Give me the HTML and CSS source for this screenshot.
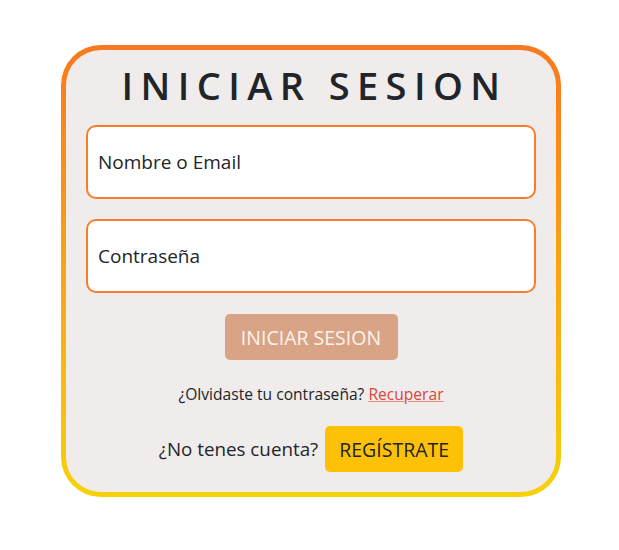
FILE: index.html
```html
<!DOCTYPE html>
<html lang="es">
<head>
<meta charset="utf-8">
<title>Iniciar sesión</title>
<link rel="stylesheet" href="styles.css">
</head>
<body>
<div class="page">
  <form class="card">
    <h1 class="title">INICIAR SESION</h1>
    <div class="field"><span class="placeholder">Nombre o Email</span></div>
    <div class="field"><span class="placeholder">Contraseña</span></div>
    <div class="actions"><button type="button" class="btn-login">INICIAR SESION</button></div>
    <p class="recover">¿Olvidaste tu contraseña? <a href="#" class="link">Recuperar</a></p>
    <div class="register">
      <span class="question">¿No tenes cuenta?</span>
      <button type="button" class="btn-register">REGÍSTRATE</button>
    </div>
  </form>
</div>
</body>
</html>
```
FILE: styles.css
```css
* { box-sizing: border-box; }
html, body { margin: 0; padding: 0; background: #ffffff; }
body { font-family: "Open Sans", "Noto Sans", sans-serif; color: #212529; }
.page { padding: 45px 0 0 61px; }
.card {
  width: 500px;
  height: 452px;
  border: 5px solid transparent;
  border-radius: 40px;
  background:
    linear-gradient(#f0eceb, #f0eceb) padding-box,
    linear-gradient(180deg, #f8781f 0%, #f6d20b 100%) border-box;
  padding: 12px 20px 0 20px;
  display: flex;
  flex-direction: column;
}
.title {
  margin: 0 0 17px 0;
  font-size: 38px;
  font-weight: 600;
  letter-spacing: 7.4px;
  text-align: center;
  line-height: 46px;
  padding-left: 7px;
  color: #212529;
}
.field {
  height: 74px;
  border: 2px solid #f97c2c;
  border-radius: 10px;
  background: #ffffff;
  display: flex;
  align-items: center;
  padding: 0 10px;
  margin-bottom: 20px;
}
.placeholder { font-size: 19px; color: #212529; }
.actions { display: flex; justify-content: center; margin-top: 1px; }
.btn-login {
  width: 173px;
  height: 46px;
  border: none;
  border-radius: 5px;
  background: #d9a485;
  color: #fbf3ee;
  font-family: inherit;
  font-size: 19.5px;
}
.recover { margin: 22px 0 0 0; text-align: center; font-size: 15.6px; line-height: 24px; }
.link { color: #d9453a; text-decoration-color: #e88a7a; }
.register {
  margin-top: 20px;
  display: flex;
  justify-content: center;
  align-items: center;
  gap: 7px;
}
.question { font-size: 18.8px; }
.btn-register {
  width: 138px;
  height: 46px;
  border: none;
  border-radius: 5px;
  background: #ffc107;
  color: #212529;
  font-family: inherit;
  font-size: 19.5px;
}
```
